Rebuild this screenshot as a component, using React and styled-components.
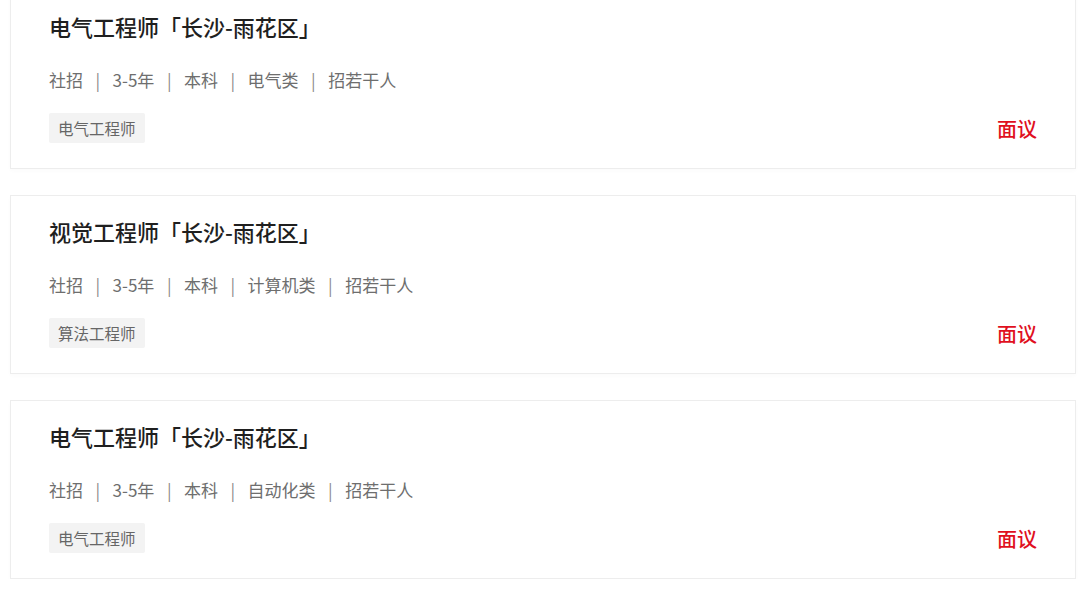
import styled, { createGlobalStyle } from 'styled-components';

const GlobalStyle = createGlobalStyle`
  html, body {
    margin: 0;
    padding: 0;
    background: #ffffff;
    font-family: "Noto Sans CJK SC", "Noto Sans", sans-serif;
  }
`;

const List = styled.div`
  display: flex;
  flex-direction: column;
  gap: 26px;
  padding: 0 4px 0 10px;
  margin-top: -10px;
`;

const Card = styled.div`
  background: #fff;
  border: 1px solid #ededed;
  box-shadow: 0 2px 4px rgba(0, 0, 0, 0.02);
  padding: 21px 38px 25px 38px;
  display: flex;
  flex-direction: column;
`;

const Title = styled.h3`
  margin: 0;
  font-size: 22px;
  line-height: 28px;
  font-weight: 500;
  color: #1f1f1f;
`;

const Meta = styled.div`
  display: flex;
  align-items: center;
  margin-top: 28px;
  font-size: 17px;
  line-height: 24px;
  color: #6e6e6e;
`;

const Sep = styled.span`
  margin: 0 12.5px;
  color: #8a8a8a;
`;

const Bottom = styled.div`
  display: flex;
  align-items: center;
  justify-content: space-between;
  margin-top: 21px;
`;

const Tag = styled.span`
  display: inline-flex;
  align-items: center;
  height: 30px;
  padding: 0 9px;
  background: #f3f3f3;
  border-radius: 2px;
  font-size: 15.5px;
  color: #666;
`;

const Salary = styled.span`
  font-size: 20px;
  font-weight: 500;
  color: #e0101e;
`;

const jobs = [
  { title: '电气工程师「长沙-雨花区」', meta: ['社招', '3-5年', '本科', '电气类', '招若干人'], tag: '电气工程师' },
  { title: '视觉工程师「长沙-雨花区」', meta: ['社招', '3-5年', '本科', '计算机类', '招若干人'], tag: '算法工程师' },
  { title: '电气工程师「长沙-雨花区」', meta: ['社招', '3-5年', '本科', '自动化类', '招若干人'], tag: '电气工程师' },
];

const App = () => (
  <>
    <GlobalStyle />
    <List>
      {jobs.map((job, i) => (
        <Card key={i}>
          <Title>{job.title}</Title>
          <Meta>
            {job.meta.map((m, j) => (
              <span key={j}>
                {j > 0 && <Sep>|</Sep>}
                {m}
              </span>
            ))}
          </Meta>
          <Bottom>
            <Tag>{job.tag}</Tag>
            <Salary>面议</Salary>
          </Bottom>
        </Card>
      ))}
    </List>
  </>
);

export default App;
